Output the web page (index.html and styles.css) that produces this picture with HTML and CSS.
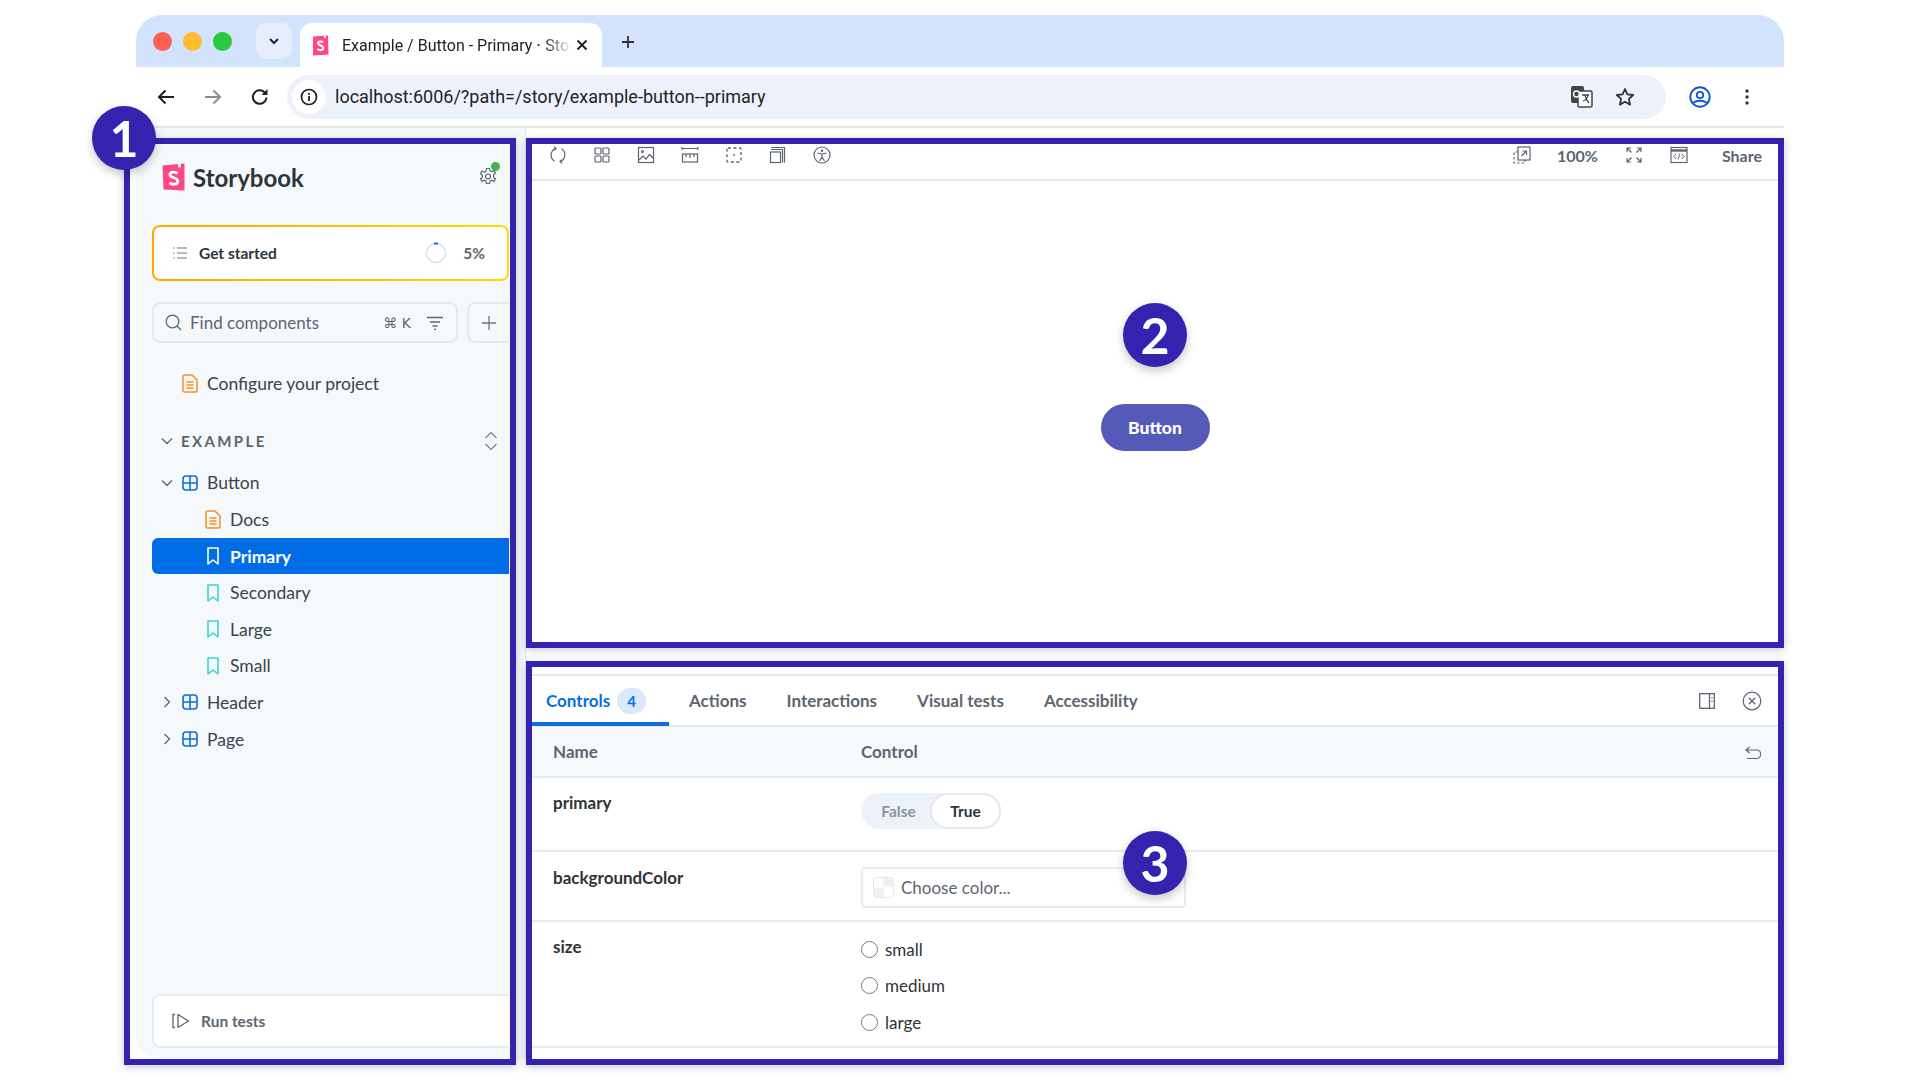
FILE: index.html
```html
<!DOCTYPE html>
<html lang="en">
<head>
    <meta charset="UTF-8">
    <meta name="viewport" content="width=device-width, initial-scale=1.0">
    <title>Storybook UI overview</title>
    <link rel="stylesheet" href="styles.css">
</head>

<body>
    <svg class="defs" width="0" height="0">
        <symbol id="i-component" viewBox="0 0 16 16">
            <rect x="1" y="1" width="14" height="14" rx="3" fill="none" stroke="currentColor" stroke-width="1.6"/>
            <path d="M8 1v14M1 8h14" stroke="currentColor" stroke-width="1.6"/>
        </symbol>
        <symbol id="i-doc" viewBox="0 0 16 19">
            <path d="M1 2.5C1 1.6 1.6 1 2.5 1H10l5 5v10.5c0 .9-.6 1.5-1.5 1.5h-11C1.600 18 1 17.400 1 16.500z" fill="none" stroke="currentColor" stroke-width="1.5"/>
            <path d="M4.500 8h7M4.500 11h7M4.500 14h7" stroke="currentColor" stroke-width="1.300"/>
        </symbol>
        <symbol id="i-story" viewBox="0 0 16 18">
            <path d="M3 1h10v16l-5-4-5 4z" fill="none" stroke="currentColor" stroke-width="1.600" stroke-linejoin="round"/>
        </symbol>
        <symbol id="i-caret-down" viewBox="0 0 14 14">
            <path d="M2 4.500l5 5 5-5" fill="none" stroke="currentColor" stroke-width="1.300"/>
        </symbol>
        <symbol id="i-caret-right" viewBox="0 0 14 14">
            <path d="M4.500 2l5 5-5 5" fill="none" stroke="currentColor" stroke-width="1.300"/>
        </symbol>
    </svg>

    <div class="window">
        <div class="tabstrip">
            <div class="lights">
                <span class="light light-red"></span>
                <span class="light light-yellow"></span>
                <span class="light light-green"></span>
            </div>
            <div class="tab-search">
                <svg width="14" height="14" viewBox="0 0 14 14"><path d="M3 5l4 4 4-4" fill="none" stroke="#0f2a4a" stroke-width="2"/></svg>
            </div>
            <div class="tab">
                <svg class="tab-logo" width="17" height="21" viewBox="0 0 17 21">
                    <path d="M1 1.500L16 .5l.5 19-15.500 1z" fill="#ff4785"/>
                    <path d="M12 .7l.1 2.600.9-.7.9.7V.6z" fill="#fff"/>
                    <path d="M11 7.500C9.500 6 6 6 6 8.300c0 2.700 5.300 1.700 5.300 4.700 0 2.600-4 2.700-5.800 1" fill="none" stroke="#fff" stroke-width="2"/>
                </svg>
                <span class="tab-title">Example / Button - Primary ⋅ Storybook</span>
                <svg class="tab-close" width="14" height="14" viewBox="0 0 14 14"><path d="M2.500 2.500l9 9M11.500 2.500l-9 9" stroke="#1f1f1f" stroke-width="1.800"/></svg>
            </div>
            <svg class="tab-new" width="16" height="16" viewBox="0 0 16 16"><path d="M8 2v12M2 8h12" stroke="#333" stroke-width="1.800"/></svg>
        </div>

        <div class="toolbar">
            <svg class="nav" width="20" height="20" viewBox="0 0 20 20"><path d="M18 10H3M9.500 3.500L3 10l6.500 6.500" fill="none" stroke="#1f1f1f" stroke-width="2"/></svg>
            <svg class="nav" width="20" height="20" viewBox="0 0 20 20"><path d="M2 10h15M10.500 3.500L17 10l-6.500 6.500" fill="none" stroke="#8a8d91" stroke-width="2"/></svg>
            <svg class="nav" width="20" height="20" viewBox="0 0 20 20"><path d="M16.500 10.500a6.800 6.800 0 1 1-2-5.300l2.200 2" fill="none" stroke="#1f1f1f" stroke-width="2"/><path d="M17.500 2v6h-6z" fill="#1f1f1f"/></svg>
            <div class="omnibox">
                <span class="site-info">
                    <svg width="18" height="18" viewBox="0 0 18 18"><circle cx="9" cy="9" r="7.500" fill="none" stroke="#1f1f1f" stroke-width="1.700"/><path d="M9 8v5M9 5v1.700" stroke="#1f1f1f" stroke-width="1.800"/></svg>
                </span>
                <span class="url">localhost:6006/?path=/story/example-button--primary</span>
                <svg class="translate" width="24" height="24" viewBox="0 0 24 24">
                    <rect x="1" y="1" width="13" height="17" rx="2" fill="#444"/>
                    <rect x="8" y="6" width="14" height="16" rx="1.500" fill="#fff" stroke="#444" stroke-width="1.500"/>
                    <circle cx="6.500" cy="9" r="3" fill="none" stroke="#fff" stroke-width="1.400"/>
                    <path d="M12 10h7M15 10c.5 3 2 6 4 8M18 10c-.5 3-2 5-5 6" fill="none" stroke="#444" stroke-width="1.300"/>
                </svg>
                <svg class="star" width="20" height="20" viewBox="0 0 20 20"><path d="M10 2l2.400 5.400 5.800.6-4.300 3.900 1.200 5.700L10 14.700l-5.100 2.900 1.200-5.700L1.800 8l5.800-.6z" fill="none" stroke="#333" stroke-width="1.800" stroke-linejoin="round"/></svg>
            </div>
            <svg class="profile" width="22" height="22" viewBox="0 0 22 22"><circle cx="11" cy="11" r="9.700" fill="none" stroke="#0b57d0" stroke-width="1.900"/><circle cx="11" cy="9" r="3.200" fill="none" stroke="#0b57d0" stroke-width="1.800"/><path d="M4.500 17c2-3 11-3 13 0" fill="none" stroke="#0b57d0" stroke-width="1.800"/></svg>
            <svg class="dots" width="6" height="18" viewBox="0 0 6 18"><circle cx="3" cy="3" r="1.700" fill="#333"/><circle cx="3" cy="9" r="1.700" fill="#333"/><circle cx="3" cy="15" r="1.700" fill="#333"/></svg>
        </div>

        <div class="app">
            <aside class="sidebar">
                <div class="brand">
                    <svg class="brand-logo" width="23" height="28" viewBox="0 0 23 28">
                        <path d="M.5 2.500L22.500.5v27L1.500 26.500z" fill="#ff4785"/>
                        <path d="M16 1l.2 4 1.300-1 1.300 1V.7z" fill="#fff"/>
                        <path d="M15.500 10.500C13.500 8.500 8 8.500 8 11.700c0 3.800 7.800 2.300 7.800 6.500 0 3.600-5.800 3.800-8.300 1.500" fill="none" stroke="#fff" stroke-width="2.800"/>
                    </svg>
                    <span class="brand-name">Storybook</span>
                    <span class="settings">
                        <svg width="20" height="20" viewBox="0 0 20 20"><path d="M8.500 1.500h3l.5 2.500 1.800.8 2.200-1.300 1.500 2.600-1.900 1.700v2.400l1.900 1.700-1.500 2.600-2.200-1.300-1.800.8-.5 2.500h-3l-.5-2.500-1.800-.8-2.200 1.300-1.500-2.600 1.900-1.700V8.300L2.500 6.600 4 4l2.200 1.300L8 4.500z" fill="none" stroke="#5c6570" stroke-width="1.200" stroke-linejoin="round"/><circle cx="10" cy="9.500" r="2.500" fill="none" stroke="#5c6570" stroke-width="1.200"/></svg>
                        <i class="status-dot"></i>
                    </span>
                </div>

                <div class="checklist">
                    <svg width="16" height="16" viewBox="0 0 16 16"><path d="M5 3h10M5 8h10M5 13h10" stroke="#6b7681" stroke-width="1.200"/><path d="M1 3h1.500M1 8h1.500M1 13h1.500" stroke="#6b7681" stroke-width="1.200"/></svg>
                    <span class="checklist-label">Get started</span>
                    <svg class="progress" width="22" height="22" viewBox="0 0 22 22"><circle cx="11" cy="11" r="9.500" fill="none" stroke="#d5e7fb" stroke-width="1.800"/><path d="M9 1.700a9.500 9.500 0 0 1 4 0" fill="none" stroke="#0a6fdc" stroke-width="1.800"/></svg>
                    <span class="checklist-value">5%</span>
                </div>

                <div class="search-row">
                    <div class="search">
                        <svg width="17" height="17" viewBox="0 0 17 17"><circle cx="7.500" cy="7.500" r="6.300" fill="none" stroke="#5c6570" stroke-width="1.300"/><path d="M12 12l4 4" stroke="#5c6570" stroke-width="1.300"/></svg>
                        <span class="search-text">Find components</span>
                        <span class="search-key">⌘ K</span>
                        <svg width="18" height="14" viewBox="0 0 18 14"><path d="M1 1.500h16M4 6h10M6.500 10h5M8 13.300h2" stroke="#5c6570" stroke-width="1.300"/></svg>
                    </div>
                    <div class="search-add">
                        <svg width="16" height="16" viewBox="0 0 16 16"><path d="M8 1v14M1 8h14" stroke="#6b7681" stroke-width="1.300"/></svg>
                    </div>
                </div>

                <div class="row row-top">
                    <svg class="icon-doc" width="16" height="19"><use href="#i-doc"/></svg>
                    <span>Configure your project</span>
                </div>

                <div class="section">
                    <svg class="caret" width="14" height="14"><use href="#i-caret-down"/></svg>
                    <span class="section-name">EXAMPLE</span>
                    <svg class="section-expand" width="16" height="20" viewBox="0 0 16 20"><path d="M2.500 7L8 1.500 13.500 7M2.500 13L8 18.500 13.500 13" fill="none" stroke="#76818c" stroke-width="1.200"/></svg>
                </div>

                <ul class="tree">
                    <li class="row row-group">
                        <svg class="caret" width="14" height="14"><use href="#i-caret-down"/></svg>
                        <svg class="icon-component" width="16" height="16"><use href="#i-component"/></svg>
                        <span>Button</span>
                    </li>
                    <li class="row row-leaf">
                        <svg class="icon-doc" width="16" height="19"><use href="#i-doc"/></svg>
                        <span>Docs</span>
                    </li>
                    <li class="row row-leaf row-selected">
                        <svg class="icon-story" width="16" height="18"><use href="#i-story"/></svg>
                        <span>Primary</span>
                    </li>
                    <li class="row row-leaf">
                        <svg class="icon-story" width="16" height="18"><use href="#i-story"/></svg>
                        <span>Secondary</span>
                    </li>
                    <li class="row row-leaf">
                        <svg class="icon-story" width="16" height="18"><use href="#i-story"/></svg>
                        <span>Large</span>
                    </li>
                    <li class="row row-leaf">
                        <svg class="icon-story" width="16" height="18"><use href="#i-story"/></svg>
                        <span>Small</span>
                    </li>
                    <li class="row row-group">
                        <svg class="caret" width="14" height="14"><use href="#i-caret-right"/></svg>
                        <svg class="icon-component" width="16" height="16"><use href="#i-component"/></svg>
                        <span>Header</span>
                    </li>
                    <li class="row row-group">
                        <svg class="caret" width="14" height="14"><use href="#i-caret-right"/></svg>
                        <svg class="icon-component" width="16" height="16"><use href="#i-component"/></svg>
                        <span>Page</span>
                    </li>
                </ul>

                <div class="run-tests">
                    <svg width="18" height="16" viewBox="0 0 18 16"><path d="M3 1.500H1v13h2" fill="none" stroke="#5c6570" stroke-width="1.300"/><path d="M6 1.500L16.500 8 6 14.500z" fill="none" stroke="#5c6570" stroke-width="1.300" stroke-linejoin="round"/></svg>
                    <span>Run tests</span>
                </div>
            </aside>

            <main class="main">
                <div class="canvas-bar">
                    <div class="tools">
                        <svg width="18" height="18" viewBox="0 0 18 18"><path d="M5.500 15.200A7.200 7.200 0 0 1 6.500 2.500M12.500 2.800a7.200 7.200 0 0 1-1 12.700" fill="none" stroke="#5c6570" stroke-width="1.200"/><path d="M5 .8l2 1.700-1.700 1.900M13 17.200l-2-1.700 1.700-1.900" fill="none" stroke="#5c6570" stroke-width="1.200"/></svg>
                        <svg width="18" height="18" viewBox="0 0 18 18"><g fill="none" stroke="#5c6570" stroke-width="1.200"><rect x="2" y="2" width="6" height="6" rx="1"/><rect x="10" y="2" width="6" height="6" rx="1"/><rect x="2" y="10" width="6" height="6" rx="1"/><rect x="10" y="10" width="6" height="6" rx="1"/></g></svg>
                        <svg width="18" height="18" viewBox="0 0 18 18"><g fill="none" stroke="#5c6570" stroke-width="1.200"><rect x="1.500" y="1.500" width="15" height="15"/><path d="M2 14l4-4 3 3 3.500-4.500L16 12"/><circle cx="5.500" cy="5.500" r="1"/></g></svg>
                        <svg width="18" height="18" viewBox="0 0 18 18"><g fill="none" stroke="#5c6570" stroke-width="1.200"><path d="M1 2.500h16M1 1v3M17 1v3"/><rect x="1.500" y="8" width="15" height="8"/><path d="M5 8v3M9 8v4M13 8v3"/></g></svg>
                        <svg width="18" height="18" viewBox="0 0 18 18"><rect x="2" y="2" width="14" height="14" rx="1" fill="none" stroke="#5c6570" stroke-width="1.300" stroke-dasharray="3 2.500"/><circle cx="9" cy="9" r=".9" fill="#5c6570"/></svg>
                        <svg width="18" height="18" viewBox="0 0 18 18"><g fill="none" stroke="#5c6570" stroke-width="1.200"><rect x="1.500" y="6" width="10" height="10.500"/><path d="M2 3.500h11.500v13M2 1.500h13.500v15"/></g></svg>
                        <svg width="18" height="18" viewBox="0 0 18 18"><circle cx="9" cy="9" r="8" fill="none" stroke="#5c6570" stroke-width="1.200"/><circle cx="9" cy="4.800" r="1.200" fill="#5c6570"/><path d="M4.500 7L9 8l4.500-1M9 8v3l-2.500 4M9 11l2.500 4" fill="none" stroke="#5c6570" stroke-width="1.200"/></svg>
                    </div>
                    <div class="tools tools-right">
                        <svg width="20" height="20" viewBox="0 0 20 20"><path d="M6 7H2v11h11v-3" fill="none" stroke="#5c6570" stroke-width="1.200" stroke-dasharray="2.500 2"/><rect x="6" y="2" width="12" height="13" fill="none" stroke="#5c6570" stroke-width="1.200"/><path d="M9.500 11L14 6.500M10.500 6h4v4" fill="none" stroke="#5c6570" stroke-width="1.200"/></svg>
                        <span class="zoom-value">100%</span>
                        <svg width="18" height="18" viewBox="0 0 18 18"><path d="M2 2l4.500 4.500M2 6V2h4M16 2l-4.500 4.500M12 2h4v4M2 16l4.500-4.500M2 12v4h4M16 16l-4.500-4.500M16 12v4h-4" fill="none" stroke="#5c6570" stroke-width="1.200"/></svg>
                        <svg width="18" height="18" viewBox="0 0 18 18"><rect x="1" y="1.500" width="16" height="15" fill="none" stroke="#5c6570" stroke-width="1.200"/><path d="M1 4.500h16" stroke="#5c6570" stroke-width="2.400"/><path d="M6 8l-2 2.500L6 13M12 8l2 2.500L12 13M10 7.500L8 13.500" fill="none" stroke="#5c6570"/></svg>
                        <span class="share">Share</span>
                    </div>
                </div>

                <div class="canvas">
                    <button class="demo-button">Button</button>
                </div>

                <section class="panel">
                    <div class="panel-tabs">
                        <span class="panel-tab panel-tab-active">Controls <b class="count">4</b></span>
                        <span class="panel-tab">Actions</span>
                        <span class="panel-tab">Interactions</span>
                        <span class="panel-tab">Visual tests</span>
                        <span class="panel-tab">Accessibility</span>
                        <span class="panel-tools">
                            <svg width="16" height="16" viewBox="0 0 16 16"><rect x=".7" y=".7" width="14.600" height="14.600" fill="none" stroke="#5c6570" stroke-width="1.300"/><path d="M10.500 1v14" stroke="#5c6570" stroke-width="1.300"/><path d="M13 4v1.500M13 7.500V9" stroke="#5c6570"/></svg>
                            <svg width="20" height="20" viewBox="0 0 20 20"><circle cx="10" cy="10" r="8.800" fill="none" stroke="#5c6570" stroke-width="1.200"/><path d="M6.800 6.800l6.400 6.400M13.200 6.800l-6.400 6.400" stroke="#5c6570" stroke-width="1.300"/></svg>
                        </span>
                    </div>

                    <div class="args args-head">
                        <span>Name</span>
                        <span>Control</span>
                        <svg class="args-reset" width="16" height="14" viewBox="0 0 16 14"><path d="M4.500 1L1 4l3.500 3M1 4h10.500a3.800 3.800 0 0 1 0 8.500H2" fill="none" stroke="#5c6570" stroke-width="1.200"/></svg>
                    </div>

                    <div class="args args-primary">
                        <span class="arg-name">primary</span>
                        <div class="toggle">
                            <span class="toggle-off">False</span>
                            <span class="toggle-on">True</span>
                        </div>
                    </div>

                    <div class="args args-color">
                        <span class="arg-name">backgroundColor</span>
                        <div class="color-input">
                            <span class="swatch"></span>
                            <span>Choose color...</span>
                        </div>
                    </div>

                    <div class="args args-size">
                        <span class="arg-name">size</span>
                        <div class="radios">
                            <label class="radio"><i></i>small</label>
                            <label class="radio"><i></i>medium</label>
                            <label class="radio"><i></i>large</label>
                        </div>
                    </div>
                </section>
            </main>
        </div>
    </div>

    <!-- annotation layer -->
    <div class="frame frame-1"></div>
    <div class="frame frame-2"></div>
    <div class="frame frame-3"></div>
    <div class="badge badge-1">1</div>
    <div class="badge badge-2">2</div>
    <div class="badge badge-3">3</div>
</body>

</html>
```

FILE: styles.css
```css
* {
    padding: 0;
    margin: 0;
    box-sizing: border-box;
}

html,
body {
    height: 100%;
    overflow: hidden;
    background: #ffffff;
}

body {
    position: relative;
    font-family: "Lato", "DejaVu Sans", sans-serif;
    color: #2e3438;
}

svg {
    display: block;
    flex-shrink: 0;
}

.defs {
    position: absolute;
}

.window {
    width: 1648px;
    height: 1043px;
    margin: 15px 0 0 136px;
    display: flex;
    flex-direction: column;
}

/* browser chrome */
.tabstrip {
    height: 52px;
    padding: 8px 0 0 17px;
    display: flex;
    align-items: flex-start;
    background: #d3e3fd;
    border-radius: 26px 26px 0 0;
}

.lights {
    height: 36px;
    display: flex;
    align-items: center;
    gap: 11px;
}

.light {
    width: 19px;
    height: 19px;
    border-radius: 50%;
}

.light-red {
    background: #ff5f57;
}

.light-yellow {
    background: #febc2e;
}

.light-green {
    background: #28c840;
}

.tab-search {
    width: 36px;
    height: 36px;
    margin-left: 24px;
    display: flex;
    align-items: center;
    justify-content: center;
    background: #e6eefc;
    border-radius: 10px;
}

.tab {
    width: 302px;
    height: 44px;
    margin-left: 8px;
    padding: 0 13px 0 12px;
    display: flex;
    align-items: center;
    background: #ffffff;
    border-radius: 12px 12px 0 0;
    font-family: "Roboto", sans-serif;
    font-size: 16px;
    color: #1f1f1f;
}

.tab-title {
    width: 230px;
    margin-left: 13px;
    overflow: hidden;
    white-space: nowrap;
    -webkit-mask-image: linear-gradient(90deg, #000 88%, transparent 100%);
    mask-image: linear-gradient(90deg, #000 88%, transparent 100%);
}

.tab-close {
    margin-left: auto;
}

.tab-new {
    margin: 11px 0 0 18px;
}

.toolbar {
    height: 61px;
    padding: 0 22px 0 20px;
    display: flex;
    align-items: center;
    border-bottom: 2px solid #e6e6e6;
}

.nav {
    margin-right: 27px;
}

.nav:nth-child(3) {
    margin-right: 17px;
}

.omnibox {
    width: 1379px;
    height: 44px;
    padding: 0 10px 0 5px;
    display: flex;
    align-items: center;
    background: #edf2fa;
    border-radius: 22px;
}

.site-info {
    width: 34px;
    height: 34px;
    display: flex;
    align-items: center;
    justify-content: center;
    background: #ffffff;
    border-radius: 50%;
}

.url {
    margin-left: 9px;
    font-family: "Roboto", sans-serif;
    font-size: 18px;
    color: #1f1f1f;
}

.translate {
    margin-left: auto;
    margin-right: 21px;
}

.star {
    margin-right: 21px;
}

.profile {
    margin-left: 23px;
}

.dots {
    margin-left: 33px;
}

/* storybook */
.app {
    flex: 1;
    min-height: 0;
    display: flex;
}

.sidebar {
    width: 390px;
    padding: 35px 0 10px 16px;
    display: flex;
    flex-direction: column;
    background: #f6f9fc;
    border-right: 1px solid #e4e8ee;
    border-radius: 0 0 0 22px;
}

.brand {
    width: 357px;
    height: 28px;
    padding-left: 10px;
    display: flex;
    align-items: center;
}

.brand-name {
    margin-left: 8px;
    font-size: 24px;
    font-weight: 700;
}

.settings {
    position: relative;
    margin-left: auto;
    margin-right: 11px;
}

.status-dot {
    position: absolute;
    top: -5px;
    right: -2px;
    width: 9px;
    height: 9px;
    background: #44b549;
    border-radius: 50%;
}

.checklist {
    width: 357px;
    height: 56px;
    margin-top: 34px;
    padding: 0 22px 0 18px;
    display: flex;
    align-items: center;
    border: 2px solid transparent;
    border-radius: 8px;
    background: linear-gradient(#ffffff, #ffffff) padding-box,
        linear-gradient(90deg, #ffa600, #ffd800) border-box;
    font-size: 15.5px;
}

.checklist-label {
    margin-left: 11px;
    font-weight: 700;
}

.progress {
    margin-left: auto;
}

.checklist-value {
    margin-left: 16px;
    font-weight: 700;
    color: #5c6570;
}

.search-row {
    width: 357px;
    height: 41px;
    margin-top: 21px;
    display: flex;
    gap: 9px;
}

.search {
    flex: 1;
    padding: 0 12px 0 11px;
    display: flex;
    align-items: center;
    background: #f6f9fc;
    border: 2px solid #e2e9f2;
    border-radius: 8px;
    font-size: 17px;
    color: #5c6570;
}

.search-text {
    margin-left: 8px;
}

.search-key {
    margin-left: auto;
    margin-right: 15px;
    font-family: "DejaVu Sans", sans-serif;
    font-size: 14px;
}

.search-add {
    width: 42px;
    display: flex;
    align-items: center;
    justify-content: center;
    border: 2px solid #e2e9f2;
    border-right: 0;
    border-radius: 8px 0 0 8px;
}

.row {
    height: 36.6px;
    display: flex;
    align-items: center;
    font-size: 17.5px;
    color: #3b434b;
    list-style: none;
}

.row-top {
    width: 357px;
    margin-top: 22px;
    padding-left: 30px;
    gap: 9px;
}

.section {
    width: 357px;
    height: 36px;
    margin-top: 21px;
    padding: 0 10px 0 8px;
    display: flex;
    align-items: center;
    color: #5c6570;
}

.section-name {
    margin-left: 7px;
    font-size: 15px;
    font-weight: 700;
    letter-spacing: 2.4px;
}

.section-expand {
    margin-left: auto;
}

.tree {
    width: 357px;
    margin-top: 6px;
}

.row-group {
    padding-left: 8px;
}

.row-group .caret {
    margin-right: 8px;
    color: #5c6570;
}

.section .caret {
    color: #5c6570;
}

.row-group .icon-component {
    margin-right: 9px;
    color: #0a6fdc;
}

.row-leaf {
    padding-left: 53px;
    gap: 9px;
}

.icon-doc {
    color: #ff8a1e;
}

.icon-story {
    color: #37d5d3;
}

.row-selected {
    background: #006de6;
    border-radius: 6px 0 0 6px;
    font-weight: 700;
    color: #ffffff;
}

.row-selected .icon-story {
    color: #ffffff;
}

.run-tests {
    width: 357px;
    height: 54px;
    margin-top: auto;
    padding-left: 18px;
    display: flex;
    align-items: center;
    gap: 11px;
    background: #ffffff;
    border: 2px solid #e8ecf1;
    border-right: 0;
    border-radius: 8px 0 0 8px;
    font-size: 15.5px;
    font-weight: 700;
    color: #5c6570;
}

.main {
    flex: 1;
    min-width: 0;
    display: flex;
    flex-direction: column;
}

.canvas-bar {
    height: 53px;
    padding: 18px 22px 0 23px;
    display: flex;
    justify-content: space-between;
    border-bottom: 2px solid #e4e8ee;
}

.tools {
    height: 18px;
    display: flex;
    align-items: center;
    gap: 26px;
}

.tools-right {
    gap: 27px;
    font-size: 16px;
    font-weight: 700;
    color: #5c6570;
}

.zoom-value {
    margin: 0 0 0 -2px;
}

.share {
    margin-left: 7px;
}

.canvas {
    flex: 1;
    display: flex;
    align-items: center;
    justify-content: center;
}

.demo-button {
    width: 109px;
    height: 47px;
    background: #555ab9;
    border: 0;
    border-radius: 24px;
    font-family: inherit;
    font-size: 17.5px;
    font-weight: 900;
    color: #ffffff;
}

.panel {
    height: 384px;
    flex-shrink: 0;
    font-size: 17px;
}

.panel-tabs {
    height: 53px;
    display: flex;
    align-items: center;
    border-top: 2px solid #e4e8ee;
    border-bottom: 2px solid #e4e8ee;
}

.panel-tab {
    height: 51px;
    padding: 0 20px;
    display: flex;
    align-items: center;
    font-weight: 700;
    color: #5c6570;
}

.panel-tab-active {
    width: 143px;
    gap: 7px;
    color: #0a6fdc;
    border-bottom: 4px solid #0a6fdc;
    border-top: 4px solid transparent;
}

.count {
    width: 29px;
    height: 26px;
    display: flex;
    align-items: center;
    justify-content: center;
    background: #d9e9fb;
    border-radius: 13px;
    font-size: 15px;
    font-weight: 700;
}

.panel-tools {
    margin-left: auto;
    margin-right: 22px;
    display: flex;
    align-items: center;
    gap: 27px;
}

.args {
    position: relative;
    padding-left: 27px;
    display: grid;
    grid-template-columns: 308px 1fr;
    align-items: start;
    border-bottom: 2px solid #e8ecf1;
}

.args-head {
    height: 51px;
    align-items: center;
    background: #f6f9fc;
    font-weight: 700;
    color: #5c6570;
}

.args-reset {
    position: absolute;
    top: 19px;
    right: 23px;
}

.arg-name {
    font-weight: 700;
    color: #2e3438;
}

.args-primary {
    height: 74px;
    padding-top: 14px;
}

.args-color {
    height: 70px;
    padding-top: 15px;
}

.args-size {
    height: 126px;
    padding-top: 14px;
}

.toggle {
    width: 140px;
    height: 36px;
    display: flex;
    align-items: center;
    background: #edf2f9;
    border-radius: 18px;
    font-size: 15.5px;
    font-weight: 700;
    margin-top: 1px;
}

.toggle-off {
    width: 69px;
    padding-left: 6px;
    text-align: center;
    color: #8a949d;
}

.toggle-on {
    flex: 1;
    height: 36px;
    line-height: 33px;
    text-align: center;
    background: #ffffff;
    border: 2px solid #e2e9f2;
    border-radius: 18px;
    color: #2e3438;
}

.color-input {
    width: 325px;
    height: 41px;
    padding-left: 10px;
    display: flex;
    align-items: center;
    gap: 7px;
    border: 2px solid #e8ecf1;
    border-radius: 4px;
    color: #5c6570;
}

.swatch {
    width: 21px;
    height: 21px;
    border: 1px solid #e4e8ee;
    border-radius: 4px;
    background: conic-gradient(#f1f2f4 25%, #ffffff 0 50%, #f1f2f4 0 75%, #ffffff 0);
}

.radios {
    margin-top: -5px;
}

.radio {
    height: 36.5px;
    display: flex;
    align-items: center;
    gap: 7px;
    color: #2e3438;
}

.radio i {
    width: 17px;
    height: 17px;
    border: 1.5px solid #767c82;
    border-radius: 50%;
    background: #ffffff;
}

/* annotation overlay */
.frame {
    position: absolute;
    border: 6px solid #3423ae;
    box-shadow: 0 2px 8px rgba(40, 30, 100, .25);
}

.frame-1 {
    left: 124px;
    top: 138px;
    width: 392px;
    height: 927px;
}

.frame-2 {
    left: 526px;
    top: 138px;
    width: 1258px;
    height: 510px;
}

.frame-3 {
    left: 526px;
    top: 661px;
    width: 1258px;
    height: 404px;
}

.badge {
    position: absolute;
    width: 64px;
    height: 64px;
    display: flex;
    align-items: center;
    justify-content: center;
    background: #3423ae;
    border-radius: 50%;
    box-shadow: 0 4px 10px rgba(0, 0, 0, .22);
    font-size: 50px;
    font-weight: 700;
    color: #ffffff;
}

.badge-1 {
    left: 92px;
    top: 106px;
}

.badge-2 {
    left: 1123px;
    top: 303px;
}

.badge-3 {
    left: 1123px;
    top: 831px;
}
```
